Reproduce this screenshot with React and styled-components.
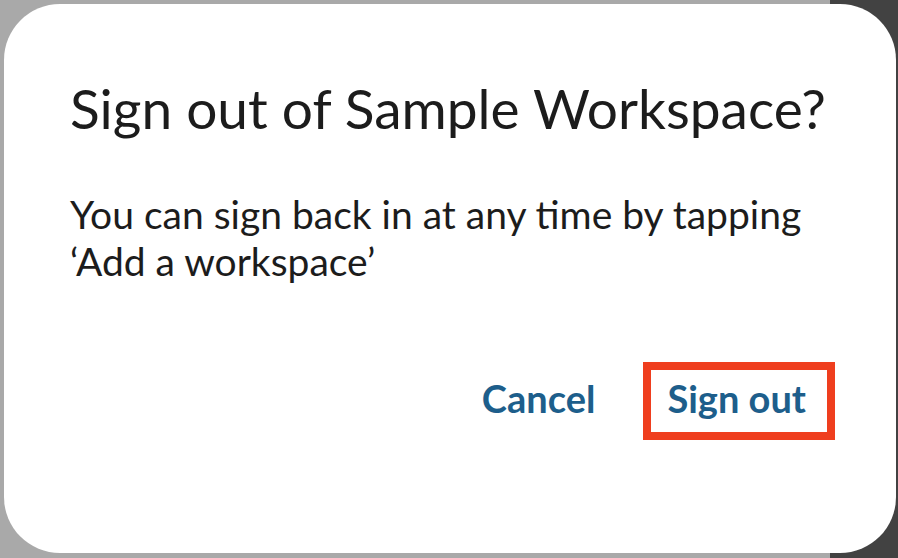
import styled, { createGlobalStyle } from "styled-components";

const GlobalStyle = createGlobalStyle`
  html, body {
    margin: 0;
    padding: 0;
  }
  body {
    width: 898px;
    height: 558px;
    overflow: hidden;
    background: linear-gradient(to right, #a9a9a9 0, #a9a9a9 830px, #424242 830px);
    font-family: Lato, "Noto Sans", sans-serif;
  }
`;

const Screen = styled.div`
  display: flex;
  width: 898px;
  height: 558px;
  padding: 4px 2px 5px 4px;
  box-sizing: border-box;
`;

const Dialog = styled.div`
  flex: 1;
  display: flex;
  flex-direction: column;
  background: #ffffff;
  border-radius: 56px;
  padding: 71px 40px 0 66px;
`;

const Title = styled.h1`
  margin: 0;
  font-size: 55px;
  font-weight: 400;
  line-height: 66px;
  color: #1c1c1c;
  white-space: nowrap;
`;

const Message = styled.p`
  margin: 50px 0 0;
  font-size: 39px;
  line-height: 47px;
  color: #1c1c1c;
  white-space: nowrap;
`;

const Actions = styled.div`
  display: flex;
  justify-content: flex-end;
  align-items: center;
  gap: 48px;
  margin-top: 77px;
  padding-right: 21px;
`;

const Action = styled.button`
  border: 8px solid ${(p) => (p.$highlight ? "#ef3e1e" : "transparent")};
  border-left-width: ${(p) => (p.$highlight ? "8px" : "0")};
  border-right-width: ${(p) => (p.$highlight ? "8px" : "0")};
  background: none;
  padding: ${(p) => (p.$highlight ? "5px 21px 11px 16px" : "5px 0 11px")};
  font-family: inherit;
  font-size: 38px;
  line-height: 46px;
  font-weight: 700;
  color: #1d5e8b;
  cursor: pointer;
`;

export default function App() {
  return (
    <>
      <GlobalStyle />
      <Screen>
        <Dialog>
          <Title>Sign out of Sample Workspace?</Title>
          <Message>
            You can sign back in at any time by tapping
            <br />
            ‘Add a workspace’
          </Message>
          <Actions>
            <Action>Cancel</Action>
            <Action $highlight>Sign out</Action>
          </Actions>
        </Dialog>
      </Screen>
    </>
  );
}
